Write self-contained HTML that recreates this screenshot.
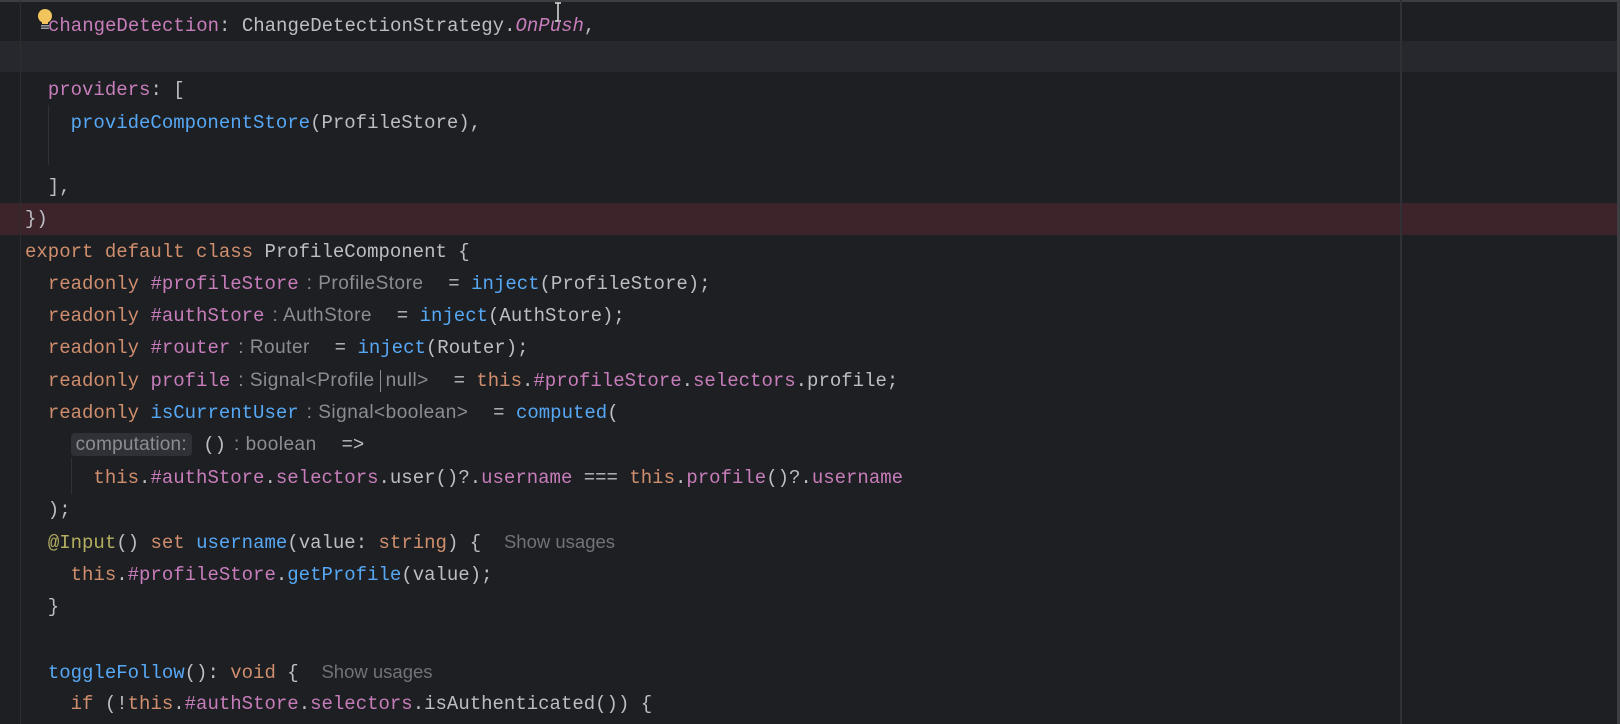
<!DOCTYPE html>
<html><head><meta charset="utf-8"><style>
html,body{margin:0;padding:0}
body{width:1620px;height:724px;background:#1e1f22;position:relative;overflow:hidden;font-family:"Liberation Mono","DejaVu Sans Mono",monospace;font-size:19px;color:#bcbec4}
.l{position:absolute;left:25px;height:32px;line-height:32px;white-space:pre}
.k{color:#cf8e6d}.p{color:#c77dbb}.f{color:#56a8f5}.d{color:#b3ae60}
.i{font-style:italic}
.h{font-family:"Liberation Sans",sans-serif;font-size:19px;color:#8a8d93;padding:0 2px 0 8px;letter-spacing:0.5px}
.u{font-family:"Liberation Sans",sans-serif;font-size:18.5px;color:#6f737a;letter-spacing:0px}
.bx{background:#2f3136;border-radius:4px;padding:1px 5px;color:#8a8d93;font-family:"Liberation Sans",sans-serif;font-size:19px;letter-spacing:0.2px}
.bar{display:inline-block;width:1px;height:22px;background:#8a8d93;vertical-align:middle;margin:0 5px}
</style></head><body>
<div style="position:absolute;left:0;top:0;width:1620px;height:2px;background:#3c3e42"></div>
<div style="position:absolute;left:0;top:41px;width:1620px;height:31px;background:#26282d"></div>
<div style="position:absolute;left:0;top:203px;width:1620px;height:32px;background:#3d242b"></div>
<div style="position:absolute;left:20px;top:0;width:1px;height:724px;background:#2b2d30"></div>
<div style="position:absolute;left:1400px;top:0;width:2px;height:724px;background:#2f3134"></div>
<div style="position:absolute;left:1617px;top:0;width:3px;height:724px;background:#3c3e42"></div>
<div style="position:absolute;left:48px;top:105px;width:1px;height:60px;background:#2f3134"></div>
<div style="position:absolute;left:71px;top:458px;width:1px;height:36px;background:#2f3134"></div>
<svg style="position:absolute;left:37px;top:8px" width="16" height="24" viewBox="0 0 16 24"><circle cx="8" cy="8" r="7" fill="#f2c55c"/><rect x="5" y="13" width="6" height="3" fill="#f2c55c"/><rect x="4" y="17" width="8" height="1.5" fill="#9a9ca0"/><rect x="4" y="19.5" width="8" height="1.5" fill="#9a9ca0"/></svg>
<svg style="position:absolute;left:554px;top:2px" width="8" height="20" viewBox="0 0 8 20"><path d="M1 1h6M4 1v18M1 19h6" stroke="#ddd" stroke-width="1.5" fill="none"/></svg>
<div class="l" style="top:10px;left:48px"><span class="p">changeDetection</span>: ChangeDetectionStrategy.<span class="p i">OnPush</span>,</div>
<div class="l" style="top:74px">  <span class="p">providers</span>: [</div>
<div class="l" style="top:107px">    <span class="f">provideComponentStore</span>(ProfileStore),</div>
<div class="l" style="top:171px">  ],</div>
<div class="l" style="top:203px">})</div>
<div class="l" style="top:236px"><span class="k">export default class</span> ProfileComponent {</div>
<div class="l" style="top:268px">  <span class="k">readonly</span> <span class="p">#profileStore</span><span class="h">: ProfileStore</span>  = <span class="f">inject</span>(ProfileStore);</div>
<div class="l" style="top:300px">  <span class="k">readonly</span> <span class="p">#authStore</span><span class="h">: AuthStore</span>  = <span class="f">inject</span>(AuthStore);</div>
<div class="l" style="top:332px">  <span class="k">readonly</span> <span class="p">#router</span><span class="h">: Router</span>  = <span class="f">inject</span>(Router);</div>
<div class="l" style="top:365px">  <span class="k">readonly</span> <span class="p">profile</span><span class="h">: Signal&lt;Profile<span class="bar"></span>null&gt;</span>  = <span class="k">this</span>.<span class="p">#profileStore</span>.<span class="p">selectors</span>.profile;</div>
<div class="l" style="top:397px">  <span class="k">readonly</span> <span class="f">isCurrentUser</span><span class="h">: Signal&lt;boolean&gt;</span>  = <span class="f">computed</span>(</div>
<div class="l" style="top:429px">    <span class="bx">computation:</span> ()<span class="h">: boolean</span>  =&gt;</div>
<div class="l" style="top:462px">      <span class="k">this</span>.<span class="p">#authStore</span>.<span class="p">selectors</span>.user()?.<span class="p">username</span> === <span class="k">this</span>.<span class="p">profile</span>()?.<span class="p">username</span></div>
<div class="l" style="top:494px">  );</div>
<div class="l" style="top:526px">  <span class="d">@Input</span>() <span class="k">set</span> <span class="f">username</span>(value: <span class="k">string</span>) {  <span class="u">Show usages</span></div>
<div class="l" style="top:559px">    <span class="k">this</span>.<span class="p">#profileStore</span>.<span class="f">getProfile</span>(value);</div>
<div class="l" style="top:591px">  }</div>
<div class="l" style="top:656px">  <span class="f">toggleFollow</span>(): <span class="k">void</span> {  <span class="u">Show usages</span></div>
<div class="l" style="top:688px">    <span class="k">if</span> (!<span class="k">this</span>.<span class="p">#authStore</span>.<span class="p">selectors</span>.isAuthenticated()) {</div>
</body></html>
